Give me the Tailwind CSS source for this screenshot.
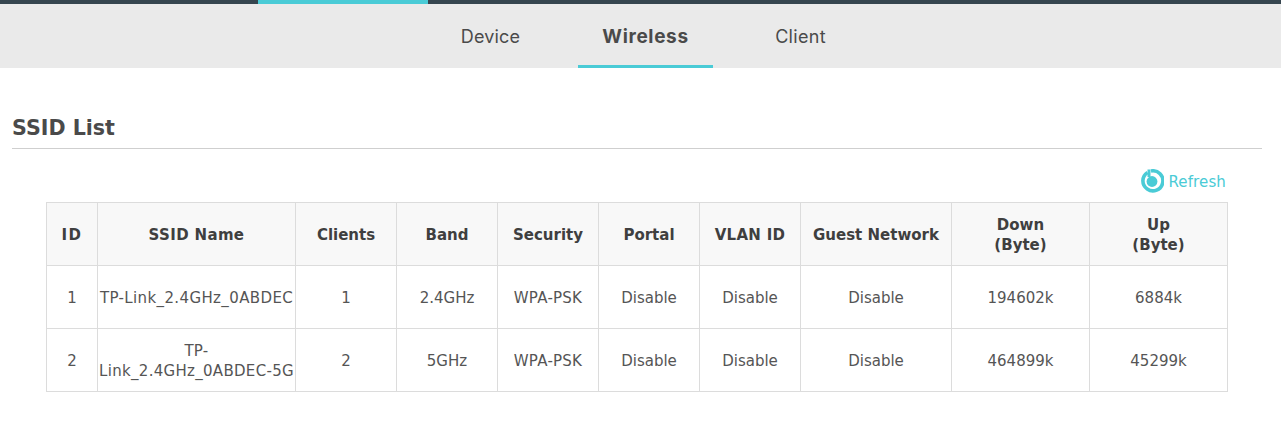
<!DOCTYPE html>
<html lang="en">
<head>
  <meta charset="UTF-8" />
  <title>Wireless</title>
  <script src="https://cdn.jsdelivr.net/npm/@tailwindcss/browser@4"></script>
</head>
<body class="bg-white text-[#4a4a4a] font-['DejaVu_Sans',sans-serif] h-[436px] overflow-hidden">
  <!-- top strip -->
  <div class="h-1 bg-[#36464f] pl-[258px]">
    <div class="h-1 w-[170px] bg-[#4acbd6]"></div>
  </div>

  <!-- tabs -->
  <nav class="h-16 bg-[#eaeaea] flex pl-[428px] font-['Inter',sans-serif] text-lg text-[#4a4a4a]">
    <a class="w-[125px] mr-[25px] h-16 flex items-center justify-center pt-[2px] tracking-[0.2px]">Device</a>
    <a class="w-[135px] h-16 flex items-center justify-center pt-[5px] text-[19px] tracking-[0.65px] font-bold border-b-[3px] border-[#4acbd6]">Wireless</a>
    <a class="w-[175px] h-16 flex items-center justify-center pt-[2px] tracking-[0.3px]">Client</a>
  </nav>

  <section class="pl-3 pr-[19px] pt-[44px]">
    <h2 class="text-[20.6px] font-bold h-[37px] leading-[32px] border-b border-[#cfcfcf] text-[#4a4a4a]">SSID List</h2>
  </section>

  <div class="flex justify-end items-center gap-[5px] pr-[55px] pt-[17px] h-[53px] pb-[7px] text-[#4acbd6] text-[15px]">
    <svg width="24" height="24" viewBox="0 0 24 24" fill="none">
      <path d="M7.5 3.4 A10 10 0 1 0 11 2" stroke="#4acbd6" stroke-width="3.6"/>
      <circle cx="12" cy="12.5" r="5.4" fill="#4acbd6"/>
      <path d="M7.5 0.5 L7.5 8 L10.5 8 L10.5 0.5 Z" fill="#4acbd6"/>
    </svg>
    <span class="mt-[4px] tracking-[0.12px]">Refresh</span>
  </div>

  <div class="pl-[46px]">
    <table class="table-fixed border-collapse w-[1182px] text-[15px] leading-5 text-center text-[#555555] [&_td]:border [&_td]:border-[#dcdcdc] [&_td]:pt-px [&_th]:pt-px [&_th]:border [&_th]:border-[#dcdcdc] [&_th]:font-bold [&_th]:bg-[#f8f8f8] [&_th]:text-[#3f3f3f]">
      <colgroup>
        <col class="w-[51px]" /><col class="w-[198px]" /><col class="w-[101px]" /><col class="w-[101px]" /><col class="w-[101px]" /><col class="w-[101px]" /><col class="w-[101px]" /><col class="w-[151px]" /><col class="w-[138px]" /><col class="w-[138px]" />
      </colgroup>
      <thead>
        <tr class="h-[63px]">
          <th class="tracking-[1.5px]">ID</th><th class="tracking-[0.35px]">SSID Name</th><th>Clients</th><th>Band</th><th>Security</th><th>Portal</th><th class="tracking-[0.3px]">VLAN ID</th><th>Guest Network</th><th>Down<br />(Byte)</th><th>Up<br />(Byte)</th>
        </tr>
      </thead>
      <tbody>
        <tr class="h-[63px]">
          <td>1</td><td class="tracking-[0.38px]">TP-Link_2.4GHz_0ABDEC</td><td>1</td><td>2.4GHz</td><td class="tracking-[0.25px]">WPA-PSK</td><td>Disable</td><td>Disable</td><td>Disable</td><td>194602k</td><td>6884k</td>
        </tr>
        <tr class="h-[63px]">
          <td>2</td><td class="tracking-[0.3px]">TP-<br />Link_2.4GHz_0ABDEC-5G</td><td>2</td><td>5GHz</td><td class="tracking-[0.25px]">WPA-PSK</td><td>Disable</td><td>Disable</td><td>Disable</td><td>464899k</td><td>45299k</td>
        </tr>
      </tbody>
    </table>
  </div>
</body>
</html>
